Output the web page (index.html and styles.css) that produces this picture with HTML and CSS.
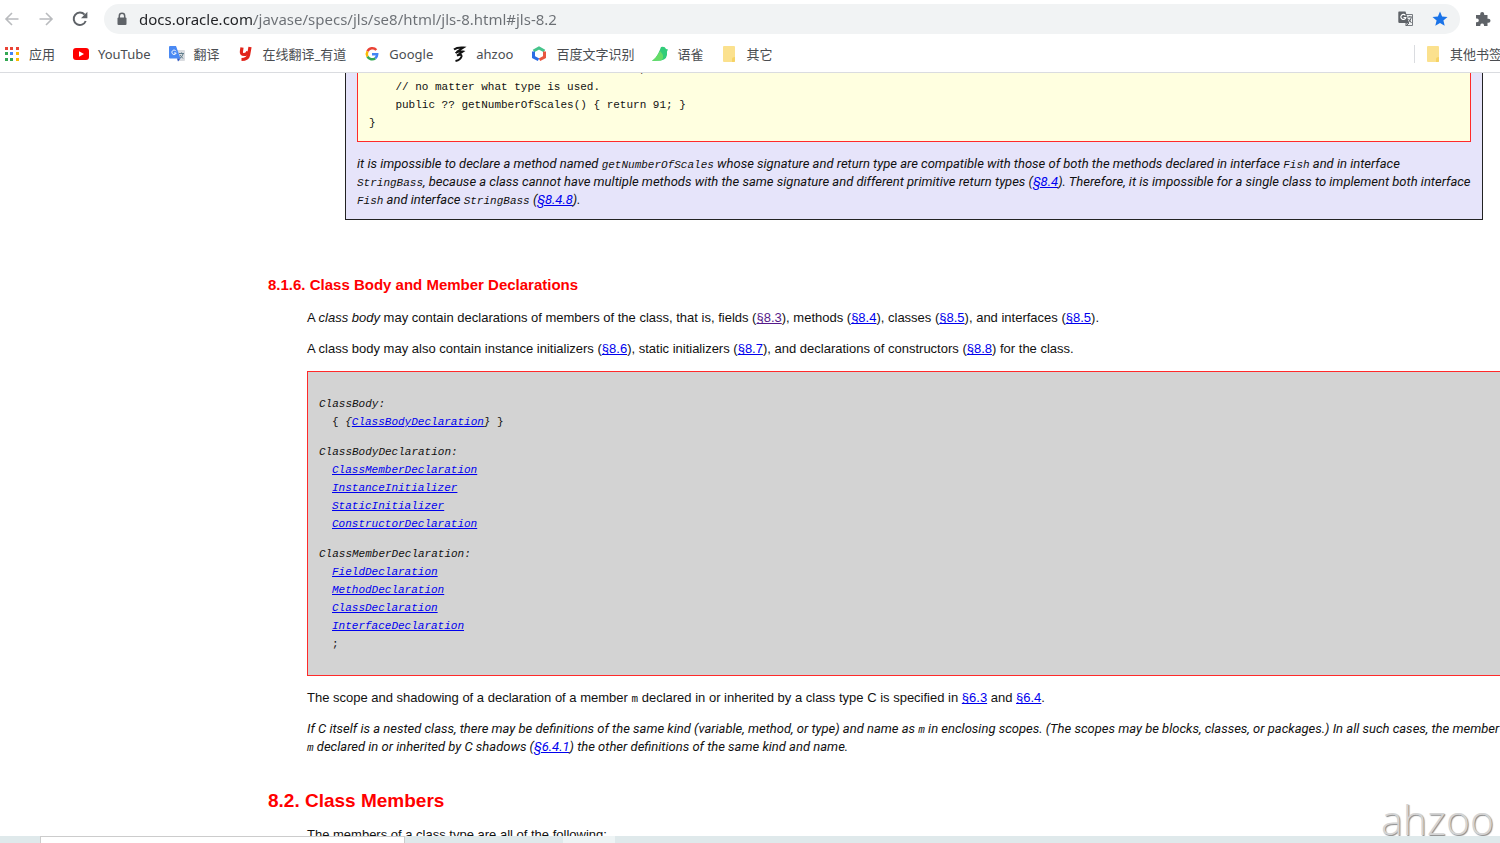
FILE: index.html
```html
<!DOCTYPE html>
<html lang="en">
<head>
<meta charset="utf-8">
<title>Chapter 8. Classes</title>
<link rel="stylesheet" href="styles.css">
</head>
<body>
<header class="chrome">
  <div class="toolbar">
    <button class="tool dim" aria-label="Back"><svg width="16" height="16" viewBox="0 0 16 16"><path d="M14.500 8H2M8 2L2 8l6 6" fill="none" stroke="currentColor" stroke-width="1.600"/></svg></button>
    <button class="tool dim" aria-label="Forward"><svg width="16" height="16" viewBox="0 0 16 16"><path d="M1.500 8H14M8 2l6 6-6 6" fill="none" stroke="currentColor" stroke-width="1.600"/></svg></button>
    <button class="tool" aria-label="Reload"><svg width="16" height="16" viewBox="0 0 16 16"><path d="M13.700 10A6.200 6.200 0 1 1 12.600 3.700" fill="none" stroke="currentColor" stroke-width="2"/><path d="M15.400 .8v6.400H9z" fill="currentColor"/></svg></button>
    <div class="address">
      <svg width="12" height="14" viewBox="0 0 12 14"><path d="M3.300 6V4a2.700 2.700 0 0 1 5.400 0v2" fill="none" stroke="#5f6368" stroke-width="1.500"/><rect x="1.500" y="5.500" width="9" height="7.500" rx="1" fill="#5f6368"/></svg>
      <input class="url" type="text" aria-label="Address" value="docs.oracle.com/javase/specs/jls/se8/html/jls-8.html#jls-8.2">
      <button class="tool" aria-label="Translate page"><svg width="16" height="16" viewBox="0 0 16 16"><path d="M7 3.500h7.500v11H8.500" fill="#f1f3f4" stroke="#777b80"/><path d="M1 0.500h6.500l3.500 11.500H1.500a1.200 1.200 0 0 1-1.200-1.200V1.500a1 1 0 0 1 .7-1z" fill="#5f6368"/><path d="M7.400 4.500A2.500 2.500 0 1 0 7.800 6.500H5.500" fill="none" stroke="#fff" stroke-width="1.200"/><path d="M8 12v3l3-3zM9.500 6h4.500M11.800 5v1M10.500 8l3 4M13.300 6.500q-.7 3-3 5" fill="none" stroke="#5f6368"/></svg></button>
      <button class="tool star" aria-label="Bookmark this page"><svg width="16" height="16" viewBox="0 0 16 16"><path d="M8 .5l2.100 5 5.400.4-4.100 3.500 1.300 5.300L8 11.900l-4.700 2.800 1.300-5.300L.5 5.900l5.400-.4z" fill="currentColor"/></svg></button>
    </div>
    <button class="tool" aria-label="Extensions"><svg width="16" height="16" viewBox="0 0 16 16"><path d="M1 4h4.200V3a2 2 0 0 1 4 0v1h3.300v3.700h1a2 2 0 0 1 0 4h-1V15H9v-1a1.900 1.900 0 0 0-3.700 0v1H1v-3.800h1a1.800 1.800 0 0 0 0-3.600H1z" fill="currentColor"/></svg></button>
  </div>
  <nav class="bookmarks">
    <a class="mark" href="#apps"><svg width="16" height="16" viewBox="0 0 16 16"><g fill="#ea4335"><path d="M1 1h3v3H1zM6 1h3v3H6zM12 1h3v3h-3z"/></g><path d="M1 6h3v3H1zM1 12h3v3H1zM6 12h3v3H6z" fill="#34a853"/><path d="M6 6h3v3H6z" fill="#4285f4"/><path d="M12 6h3v3h-3zM12 12h3v3h-3z" fill="#fbbc05"/></svg>应用</a>
    <a class="mark" href="#youtube"><svg width="16" height="16" viewBox="0 0 16 16"><rect y="2" width="16" height="12" rx="3" fill="#f00"/><path d="M6 5.300v5.400L11 8z" fill="#fff"/></svg>YouTube</a>
    <a class="mark" href="#translate"><svg width="16" height="16" viewBox="0 0 16 16"><path d="M6 4h9a1 1 0 0 1 1 1v9a1 1 0 0 1-1 1H9z" fill="#dadce0"/><path d="M1 0h6l4.500 12.500H1a1 1 0 0 1-1-1V1a1 1 0 0 1 1-1z" fill="#4a89f3"/><path d="M8 12.500h3.500L9 15.500z" fill="#2a56c6"/><path d="M7 5.200A2.200 2.200 0 1 0 7.200 7H5" fill="none" stroke="#fff"/><path d="M10 7.500h5M12.500 6.500v1M11 9l3 3.500M14 8q-.7 3-3 4" fill="none" stroke="#607d8b"/></svg>翻译</a>
    <a class="mark" href="#youdao"><svg width="16" height="16" viewBox="0 0 16 16"><path d="M4 1.500L3.400 5.500Q3 8.500 6 8.500t3.900-3M12 1L10.600 9Q9.800 13.400 3.500 13.500" fill="none" stroke="#e1251b" stroke-width="3.200"/></svg>在线翻译_有道</a>
    <a class="mark" href="#google"><svg width="16" height="16" viewBox="0 0 16 16"><g fill="none" stroke-width="2.500"><path d="M12.300 4A5.200 5.200 0 0 0 3.500 5.400" stroke="#ea4335"/><path d="M3.500 5.400a5.200 5.200 0 0 0 0 5.200" stroke="#fbbc05"/><path d="M3.500 10.600a5.200 5.200 0 0 0 7.800 1.600" stroke="#34a853"/><path d="M11.300 12.200A5.200 5.200 0 0 0 13.200 8.200H8" stroke="#4285f4"/></g></svg>Google</a>
    <a class="mark" href="#ahzoo"><svg width="16" height="16" viewBox="0 0 16 16"><path d="M3 3.500Q6 1 12.500 1.500L5.500 6M4.500 7Q8 4.500 12 5.500L6 9.500Q11 7.500 10.500 10.500 9.500 14 4.500 15" fill="none" stroke="#111" stroke-width="2"/></svg>ahzoo</a>
    <a class="mark" href="#ocr"><svg width="16" height="16" viewBox="0 0 16 16"><g fill="none" stroke-width="3"><path d="M2.500 5L8 2l5.500 3" stroke="#45c48b"/><path d="M2.500 5.500V11L7.500 13.800" stroke="#2b6de5"/><path d="M13.500 5.500V11L8.500 13.800" stroke="#e8563f"/></g></svg>百度文字识别</a>
    <a class="mark" href="#yuque"><svg width="16" height="16" viewBox="0 0 16 16"><path d="M9 1q4-1 5 2l2 .5-1 2q1 8-6 9L0 15Q4 12 6 8q2-4 3-7z" fill="#31cc79"/><path d="M8 5Q14 11 9 14.500L0 15Q5 11 8 5z" fill="#66dc67"/></svg>语雀</a>
    <a class="mark" href="#misc"><svg width="16" height="16" viewBox="0 0 16 16"><path d="M3 0h10a1 1 0 0 1 1 1v14a1 1 0 0 1-1 1H3a1 1 0 0 1-1-1V1a1 1 0 0 1 1-1z" fill="#fbe18e"/><path d="M11 16v-3q0-2 3-2v4a1 1 0 0 1-1 1z" fill="#f6d365"/></svg>其它</a>
    <a class="mark other" href="#other"><svg width="16" height="16" viewBox="0 0 16 16"><path d="M3 0h10a1 1 0 0 1 1 1v14a1 1 0 0 1-1 1H3a1 1 0 0 1-1-1V1a1 1 0 0 1 1-1z" fill="#fbe18e"/><path d="M11 16v-3q0-2 3-2v4a1 1 0 0 1-1 1z" fill="#f6d365"/></svg>其他书签</a>
  </nav>
</header>
<main class="page">
  <article class="doc">
    <div class="note">
<pre class="listing">    // This declaration cannot be correct,
    // no matter what type is used.
    public ?? getNumberOfScales() { return 91; }
}</pre>
      <p>it is impossible to declare a method named <code>getNumberOfScales</code> whose signature and return type are compatible with those of both the methods declared in interface <code>Fish</code> and in interface <code>StringBass</code>, because a class cannot have multiple methods with the same signature and different primitive return types (<a href="#jls-8.4">§8.4</a>). Therefore, it is impossible for a single class to implement both interface <code>Fish</code> and interface <code>StringBass</code> (<a href="#jls-8.4.8">§8.4.8</a>).</p>
    </div>
    <h3>8.1.6. Class Body and Member Declarations</h3>
    <div class="section">
      <p>A <em>class body</em> may contain declarations of members of the class, that is, fields (<a class="seen" href="#jls-8.3">§8.3</a>), methods (<a href="#jls-8.4">§8.4</a>), classes (<a href="#jls-8.5">§8.5</a>), and interfaces (<a href="#jls-8.5">§8.5</a>).</p>
      <p>A class body may also contain instance initializers (<a href="#jls-8.6">§8.6</a>), static initializers (<a href="#jls-8.7">§8.7</a>), and declarations of constructors (<a href="#jls-8.8">§8.8</a>) for the class.</p>
      <dl class="grammar">
        <dt>ClassBody:</dt>
        <dd><span class="literal">{ </span>{<a href="#ClassBodyDeclaration">ClassBodyDeclaration</a>}<span class="literal"> }</span></dd>
        <dt>ClassBodyDeclaration:</dt>
        <dd><a href="#ClassMemberDeclaration">ClassMemberDeclaration</a></dd>
        <dd><a href="#InstanceInitializer">InstanceInitializer</a></dd>
        <dd><a href="#StaticInitializer">StaticInitializer</a></dd>
        <dd><a href="#ConstructorDeclaration">ConstructorDeclaration</a></dd>
        <dt>ClassMemberDeclaration:</dt>
        <dd><a href="#FieldDeclaration">FieldDeclaration</a></dd>
        <dd><a href="#MethodDeclaration">MethodDeclaration</a></dd>
        <dd><a href="#ClassDeclaration">ClassDeclaration</a></dd>
        <dd><a href="#InterfaceDeclaration">InterfaceDeclaration</a></dd>
        <dd><span class="literal">;</span></dd>
      </dl>
      <p>The scope and shadowing of a declaration of a member <code>m</code> declared in or inherited by a class type C is specified in <a href="#jls-6.3">§6.3</a> and <a href="#jls-6.4">§6.4</a>.</p>
      <p class="aside">If C itself is a nested class, there may be definitions of the same kind (variable, method, or type) and name as <code>m</code> in enclosing scopes. (The scopes may be blocks, classes, or packages.) In all such cases, the member <code>m</code>&nbsp;declared in or inherited by C shadows (<a href="#jls-6.4.1">§6.4.1</a>) the other definitions of the same kind and name.</p>
    </div>
    <h2>8.2. Class Members</h2>
    <div class="section">
      <p>The members of a class type are all of the following:</p>
    </div>
  </article>
  <div class="watermark">ahzoo</div>
</main>
<footer class="taskbar"><div class="task"></div><div class="glow"></div></footer>
</body>
</html>
```

FILE: styles.css
```css
* { box-sizing: border-box; }

body {
  margin: 0;
  height: 100vh;
  display: flex;
  flex-direction: column;
  overflow: hidden;
  background: #fff;
  color: #111;
  font: 13px/18px "Liberation Sans", Arial, sans-serif;
}

.chrome {
  flex: none;
  border-bottom: 1px solid #dadce0;
  font-family: "Noto Sans", "Noto Sans CJK SC", sans-serif;
  color: #4a4d51;
}

.toolbar {
  display: flex;
  align-items: center;
  gap: 18px;
  height: 38px;
  padding: 0 9px 0 4px;
}

.tool {
  flex: none;
  display: flex;
  padding: 0;
  border: 0;
  background: none;
  color: #5f6368;
}

.dim { color: #b9bbbe; }
.star { color: #1a73e8; }

.address {
  flex: 1;
  display: flex;
  align-items: center;
  gap: 18px;
  height: 30px;
  margin-left: -2px;
  margin-right: -3px;
  padding: 0 12px;
  border-radius: 15px;
  background: #f1f3f4;
}

.url {
  flex: 1;
  min-width: 0;
  margin-left: -7px;
  padding: 0;
  border: 0;
  outline: 0;
  font: 15px/22px "Noto Sans", sans-serif;
  color: transparent;
  background: linear-gradient(to right, #202124 115px, #6b6f74 115px);
  -webkit-background-clip: text;
  background-clip: text;
}

.bookmarks {
  display: flex;
  align-items: center;
  gap: 18px;
  height: 34px;
  padding: 0 0 3px 4px;
}

.mark {
  flex: none;
  display: flex;
  align-items: center;
  gap: 9px;
  color: inherit;
  text-decoration: none;
  white-space: nowrap;
}

.other {
  margin-left: auto;
  margin-right: -2px;
  padding-left: 10px;
  border-left: 1px solid #dadce0;
}

.page {
  flex: 1;
  min-height: 0;
  position: relative;
  overflow: hidden;
}

/* The article is scrolled part of a line past the top and runs off the right side. */
.doc {
  margin: -13px -21px 0 268px;
}

p { margin: 0 0 13px; }

a { color: #00e; }
.seen { color: #551a8b; }

code, .listing, .grammar {
  font-family: "Liberation Mono", monospace;
  font-size: 11px;
}

code { line-height: 1; }

.note {
  margin: 0 38px 0 77px;
  padding: 0 11px 10px;
  border: 1px solid #222;
  border-top: 0;
  background: #e6e4fa;
}

.note p {
  margin: 0;
}

.note p, .aside {
  font-family: Roboto, "Liberation Sans", sans-serif;
  font-style: italic;
}

.listing {
  margin: 0 0 13px;
  padding: 0 11px 9px;
  border: 1px solid #ff2a2a;
  border-top: 0;
  background: #ffffe0;
}

h2, h3 { color: #f00; }

h3 {
  margin: 55px 0 14px;
  font-size: 15px;
  line-height: 20px;
}

h2 {
  margin: 33px 0 13px;
  font-size: 19px;
  line-height: 24px;
}

.section { padding-left: 39px; }

.grammar {
  margin: 0 0 13px;
  padding: 11px 11px 22px;
  border: 1px solid #ff2a2a;
  background: #d3d3d3;
  font-style: italic;
}

.grammar dt { margin-top: 12px; }
.grammar dd { margin: 0 0 0 13px; }
.literal { font-style: normal; white-space: pre; }

.watermark {
  position: absolute;
  right: 6px;
  bottom: -6px;
  color: #d4d4d4;
  font: 300 41px/46px "Open Sans", sans-serif;
  text-shadow: 1px 1px 1px #888;
}

.taskbar {
  flex: none;
  display: flex;
  height: 7px;
  padding-left: 40px;
  background: #dfe9eb;
}

.task {
  width: 25%;
  border: 1px solid #ccc;
  border-bottom: 0;
  background: #fff;
}

.glow {
  width: 52px;
  margin-left: 158px;
  background: #eef4f5;
}
```
